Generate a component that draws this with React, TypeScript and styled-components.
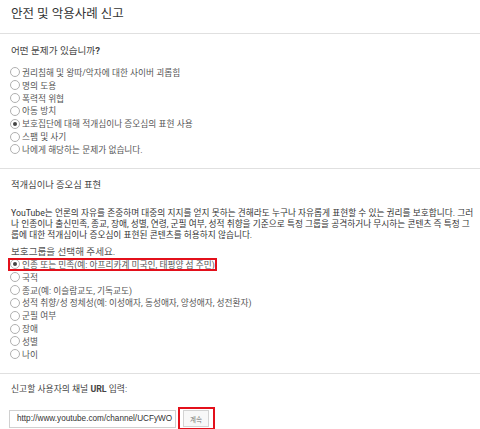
import React from "react";
import styled, { createGlobalStyle } from "styled-components";

const Global = createGlobalStyle`
  html, body { margin: 0; padding: 0; background: #fff; }
  body { font-family: Roboto, "Noto Sans CJK KR", sans-serif; color: #333; }
  * { box-sizing: border-box; }
`;

const Page = styled.div`
  width: 480px;
  height: 429px;
  overflow: hidden;
  display: flex;
  flex-direction: column;
  background: #fff;
`;

const Header = styled.header`
  height: 34px;
  padding: 5px 11px 0;
  border-bottom: 1px solid #e0e0e0;
`;

const Title = styled.h1`
  margin: 0;
  font-size: 12.5px;
  line-height: 18px;
  font-weight: 400;
  color: #333;
`;

const Section = styled.section<{ $pad: string; $h: number; $last?: boolean }>`
  padding: ${(p) => p.$pad};
  height: ${(p) => p.$h}px;
  border-bottom: ${(p) => (p.$last ? "none" : "1px solid #e0e0e0")};
  display: flex;
  flex-direction: column;
`;

const SectionTitle = styled.h2<{ $size?: number }>`
  margin: 0 0 0 11px;
  font-size: ${(p) => p.$size ?? 9.6}px;
  line-height: 12px;
  font-weight: 400;
  color: #444;
  b { font-weight: 700; }
`;

const Paragraph = styled.p`
  margin: 17px 0 0 11px;
  width: 465px;
  font-size: 8.7px;
  line-height: 11px;
  color: #333;
`;

const Prompt = styled.div`
  margin: 5px 0 0 11px;
  font-size: 9.6px;
  line-height: 12px;
  color: #555;
`;

const RadioList = styled.div<{ $top: number }>`
  margin-top: ${(p) => p.$top}px;
  display: flex;
  flex-direction: column;
`;

const RadioRow = styled.label<{ $highlight?: boolean }>`
  display: flex;
  align-items: center;
  width: fit-content;
  height: 12.85px;
  margin-left: 8px;
  padding: 0 2px 0 1.5px;
  gap: 2.5px;
  font-size: 8.7px;
  color: #555;
  white-space: nowrap;
  outline: ${(p) => (p.$highlight ? "2px solid #e3101b" : "none")};
  outline-offset: -2px;
`;

const Circle = styled.span<{ $checked?: boolean }>`
  width: 10px;
  height: 10px;
  border-radius: 50%;
  border: 1px solid #b0b0b0;
  background: #fff;
  display: flex;
  align-items: center;
  justify-content: center;
  flex: none;
  &::after {
    content: "";
    width: 4px;
    height: 4px;
    border-radius: 50%;
    background: ${(p) => (p.$checked ? "#444" : "transparent")};
  }
`;

const UrlRow = styled.div`
  margin: 12px 0 0 9px;
  display: flex;
  align-items: center;
  gap: 2px;
`;

const UrlInput = styled.div`
  width: 167px;
  height: 18px;
  border: 1px solid #d0d0d0;
  padding: 0 0 0 7px;
  font-family: "Liberation Sans", Arial, sans-serif;
  font-size: 8.2px;
  line-height: 16px;
  color: #333;
  white-space: nowrap;
  overflow: hidden;
`;

const Highlight = styled.div`
  border: 2px solid #e3101b;
  padding: 1px 4px 1px 3px;
  display: flex;
`;

const Button = styled.button`
  width: 26px;
  height: 17px;
  padding: 0;
  border: 1px solid #d3d3d3;
  background: #f8f8f8;
  color: #777;
  font-family: "Noto Sans CJK KR", sans-serif;
  font-size: 6.5px;
`;

type Opt = { label: string; checked?: boolean; highlight?: boolean };

const problems: Opt[] = [
  { label: "권리침해 및 왕따/악자에 대한 사이버 괴롭힘" },
  { label: "명의 도용" },
  { label: "폭력적 위협" },
  { label: "아동 방치" },
  { label: "보호집단에 대해 적개심이나 증오심의 표현 사용", checked: true },
  { label: "스팸 및 사기" },
  { label: "나에게 해당하는 문제가 없습니다." },
];

const groups: Opt[] = [
  { label: "인종 또는 민족(예: 아프리카계 미국인, 태평양 섬 주민)", checked: true, highlight: true },
  { label: "국적" },
  { label: "종교(예: 이슬람교도, 기독교도)" },
  { label: "성적 취향/성 정체성(예: 이성애자, 동성애자, 양성애자, 성전환자)" },
  { label: "군필 여부" },
  { label: "장애" },
  { label: "성별" },
  { label: "나이" },
];

const Radios = ({ items, top }: { items: Opt[]; top: number }) => (
  <RadioList $top={top}>
    {items.map((o) => (
      <RadioRow key={o.label} $highlight={o.highlight}>
        <Circle $checked={o.checked} />
        {o.label}
      </RadioRow>
    ))}
  </RadioList>
);

export default function App() {
  return (
    <>
      <Global />
      <Page>
        <Header>
          <Title>안전 및 악용사례 신고</Title>
        </Header>
        <Section $pad="11px 0 0" $h={135}>
          <SectionTitle $size={9.6}>
            어떤 문제가 있습니까<b>?</b>
          </SectionTitle>
          <Radios items={problems} top={9} />
        </Section>
        <Section $pad="10px 0 0" $h={205}>
          <SectionTitle $size={9.3}>적개심이나 증오심 표현</SectionTitle>
          <Paragraph>
            YouTube는 언론의 자유를 존중하며 대중의 지지를 얻지 못하는 견해라도 누구나 자유롭게 표현할 수 있는 권리를 보호합니다. 그러나 인종이나 출신민족, 종교, 장애, 성별, 연령, 군필 여부, 성적 취향을 기준으로 특정 그룹을 공격하거나 무시하는 콘텐츠 즉 특정 그룹에 대한 적개심이나 증오심이 표현된 콘텐츠를 허용하지 않습니다.
          </Paragraph>
          <Prompt>보호그룹을 선택해 주세요.</Prompt>
          <Radios items={groups} top={0} />
        </Section>
        <Section $pad="9px 0 0" $h={55} $last>
          <SectionTitle $size={8.8}>
            신고할 사용자의 채널 <b>URL</b> 입력:
          </SectionTitle>
          <UrlRow>
            <UrlInput>http://www.youtube.com/channel/UCFyWO</UrlInput>
            <Highlight>
              <Button>계속</Button>
            </Highlight>
          </UrlRow>
        </Section>
      </Page>
    </>
  );
}
